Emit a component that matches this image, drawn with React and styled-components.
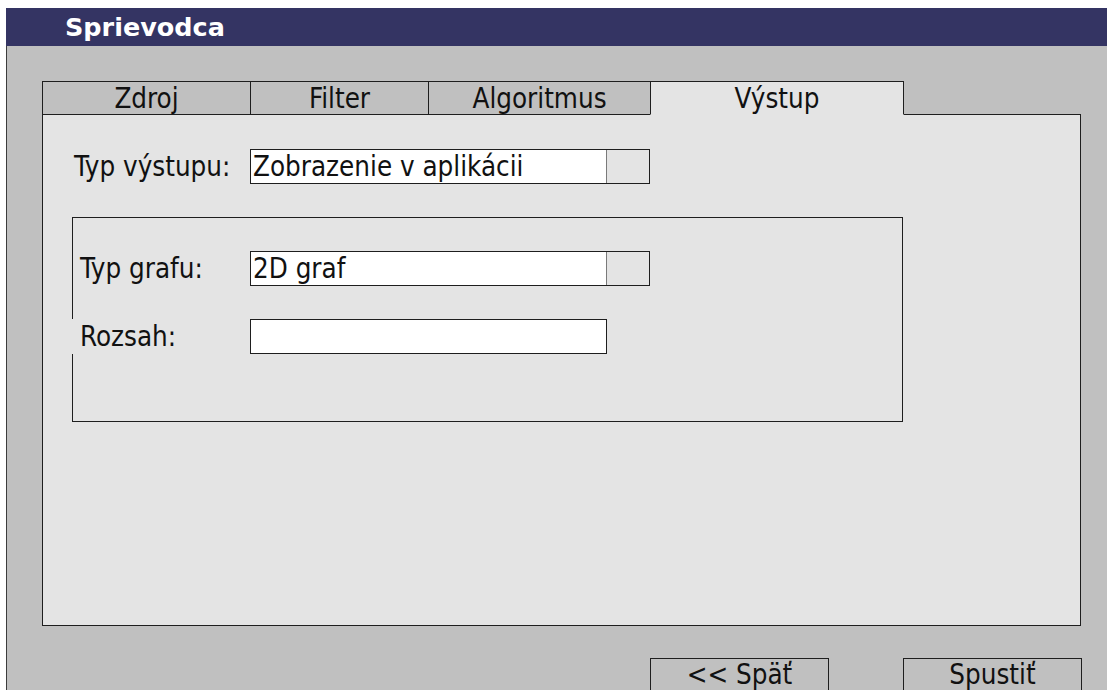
import React from 'react';
import styled, { createGlobalStyle } from 'styled-components';

const GlobalStyle = createGlobalStyle`
  html, body {
    margin: 0;
    padding: 0;
    background: #ffffff;
    overflow: hidden;
  }
  body {
    font-family: 'DejaVu Sans Condensed', 'DejaVu Sans', 'Liberation Sans', sans-serif;
    font-stretch: condensed;
    color: #111111;
  }
`;

const Screen = styled.div`
  padding: 8px 0 0 6px;
  height: 690px;
  box-sizing: border-box;
`;

const TitleBar = styled.div`
  height: 38px;
  background: #343463;
  color: #ffffff;
  font-family: 'DejaVu Sans', sans-serif;
  font-stretch: normal;
  font-weight: bold;
  font-size: 25.5px;
  line-height: 38px;
  padding-left: 59px;
`;

const WindowBody = styled.div`
  background: #c0c0c0;
  border-left: 1px solid #3c3c3c;
  min-height: 660px;
  box-sizing: border-box;
  padding: 35px 0 0 35px;
  display: flex;
  flex-direction: column;

  > * {
    flex-shrink: 0;
  }
`;

const TabRow = styled.div`
  display: flex;
  align-items: flex-end;
`;

const Tab = styled.div`
  position: relative;
  z-index: ${({ $active }) => ($active ? 1 : 0)};
  width: ${({ $width }) => $width}px;
  height: 34px;
  box-sizing: border-box;
  margin-left: -1px;
  border: 1px solid #1e1e1e;
  border-bottom-color: ${({ $active }) => ($active ? '#e4e4e4' : '#1e1e1e')};
  background: ${({ $active }) => ($active ? '#e4e4e4' : '#c0c0c0')};
  font-size: 27.5px;
  line-height: 32px;
  text-align: center;

  &:first-child {
    margin-left: 0;
  }
`;

const Panel = styled.div`
  width: 1039px;
  height: 512px;
  box-sizing: border-box;
  margin-top: -1px;
  background: #e4e4e4;
  border: 1px solid #1e1e1e;
  padding: 34px 0 0 31px;
`;

const Row = styled.div`
  display: flex;
  align-items: center;
  height: 35px;
`;

const Label = styled.div`
  width: ${({ $width }) => $width}px;
  font-size: 27.5px;
  line-height: 35px;
  height: 35px;
  box-sizing: border-box;
  padding-left: ${({ $pad }) => $pad || 0}px;
  margin-left: ${({ $shift }) => $shift || 0}px;
  background: #e4e4e4;
`;

const Combo = styled.div`
  display: flex;
  width: 400px;
  height: 35px;
  box-sizing: border-box;
  border: 1px solid #1e1e1e;
  background: #e4e4e4;
`;

const Field = styled.div`
  width: ${({ $width }) => $width}px;
  height: 35px;
  box-sizing: border-box;
  background: #ffffff;
  font-size: 27.5px;
  line-height: 32px;
  padding-left: 2px;
  white-space: nowrap;
  overflow: hidden;
`;

const ComboField = styled(Field)`
  height: 33px;
  border-right: 1px solid #7a7a7a;
`;

const TextInput = styled(Field)`
  border: 1px solid #1e1e1e;
`;

const GroupBox = styled.div`
  margin: 33px 0 0 -2px;
  width: 831px;
  height: 205px;
  box-sizing: border-box;
  border: 1px solid #1e1e1e;
  padding-top: 33px;
  display: flex;
  flex-direction: column;
  gap: 33px;
`;

const ButtonRow = styled.div`
  display: flex;
  gap: 74px;
  margin: 32px 0 0 608px;
`;

const Button = styled.div`
  width: 179px;
  height: 36px;
  box-sizing: border-box;
  border: 1px solid #1e1e1e;
  background: #c0c0c0;
  font-size: 27.5px;
  line-height: 30px;
  text-align: center;
`;

const tabs = [
  { title: 'Zdroj', width: 209 },
  { title: 'Filter', width: 179 },
  { title: 'Algoritmus', width: 223 },
  { title: 'Výstup', width: 254, active: true },
];

const ComboBox = ({ value }) => (
  <Combo>
    <ComboField $width={356}>{value}</ComboField>
  </Combo>
);

export default function App() {
  return (
    <>
      <GlobalStyle />
      <Screen>
        <TitleBar>Sprievodca</TitleBar>
        <WindowBody>
          <TabRow>
            {tabs.map((t) => (
              <Tab key={t.title} $width={t.width} $active={t.active}>
                {t.title}
              </Tab>
            ))}
          </TabRow>
          <Panel>
            <Row>
              <Label $width={176}>Typ výstupu:</Label>
              <ComboBox value="Zobrazenie v aplikácii" />
            </Row>
            <GroupBox>
              <Row>
                <Label $width={177} $pad={7}>Typ grafu:</Label>
                <ComboBox value="2D graf" />
              </Row>
              <Row>
                <Label $width={178} $pad={8} $shift={-1}>Rozsah:</Label>
                <TextInput $width={357} />
              </Row>
            </GroupBox>
          </Panel>
          <ButtonRow>
            <Button>&lt;&lt; Späť</Button>
            <Button>Spustiť</Button>
          </ButtonRow>
        </WindowBody>
      </Screen>
    </>
  );
}
